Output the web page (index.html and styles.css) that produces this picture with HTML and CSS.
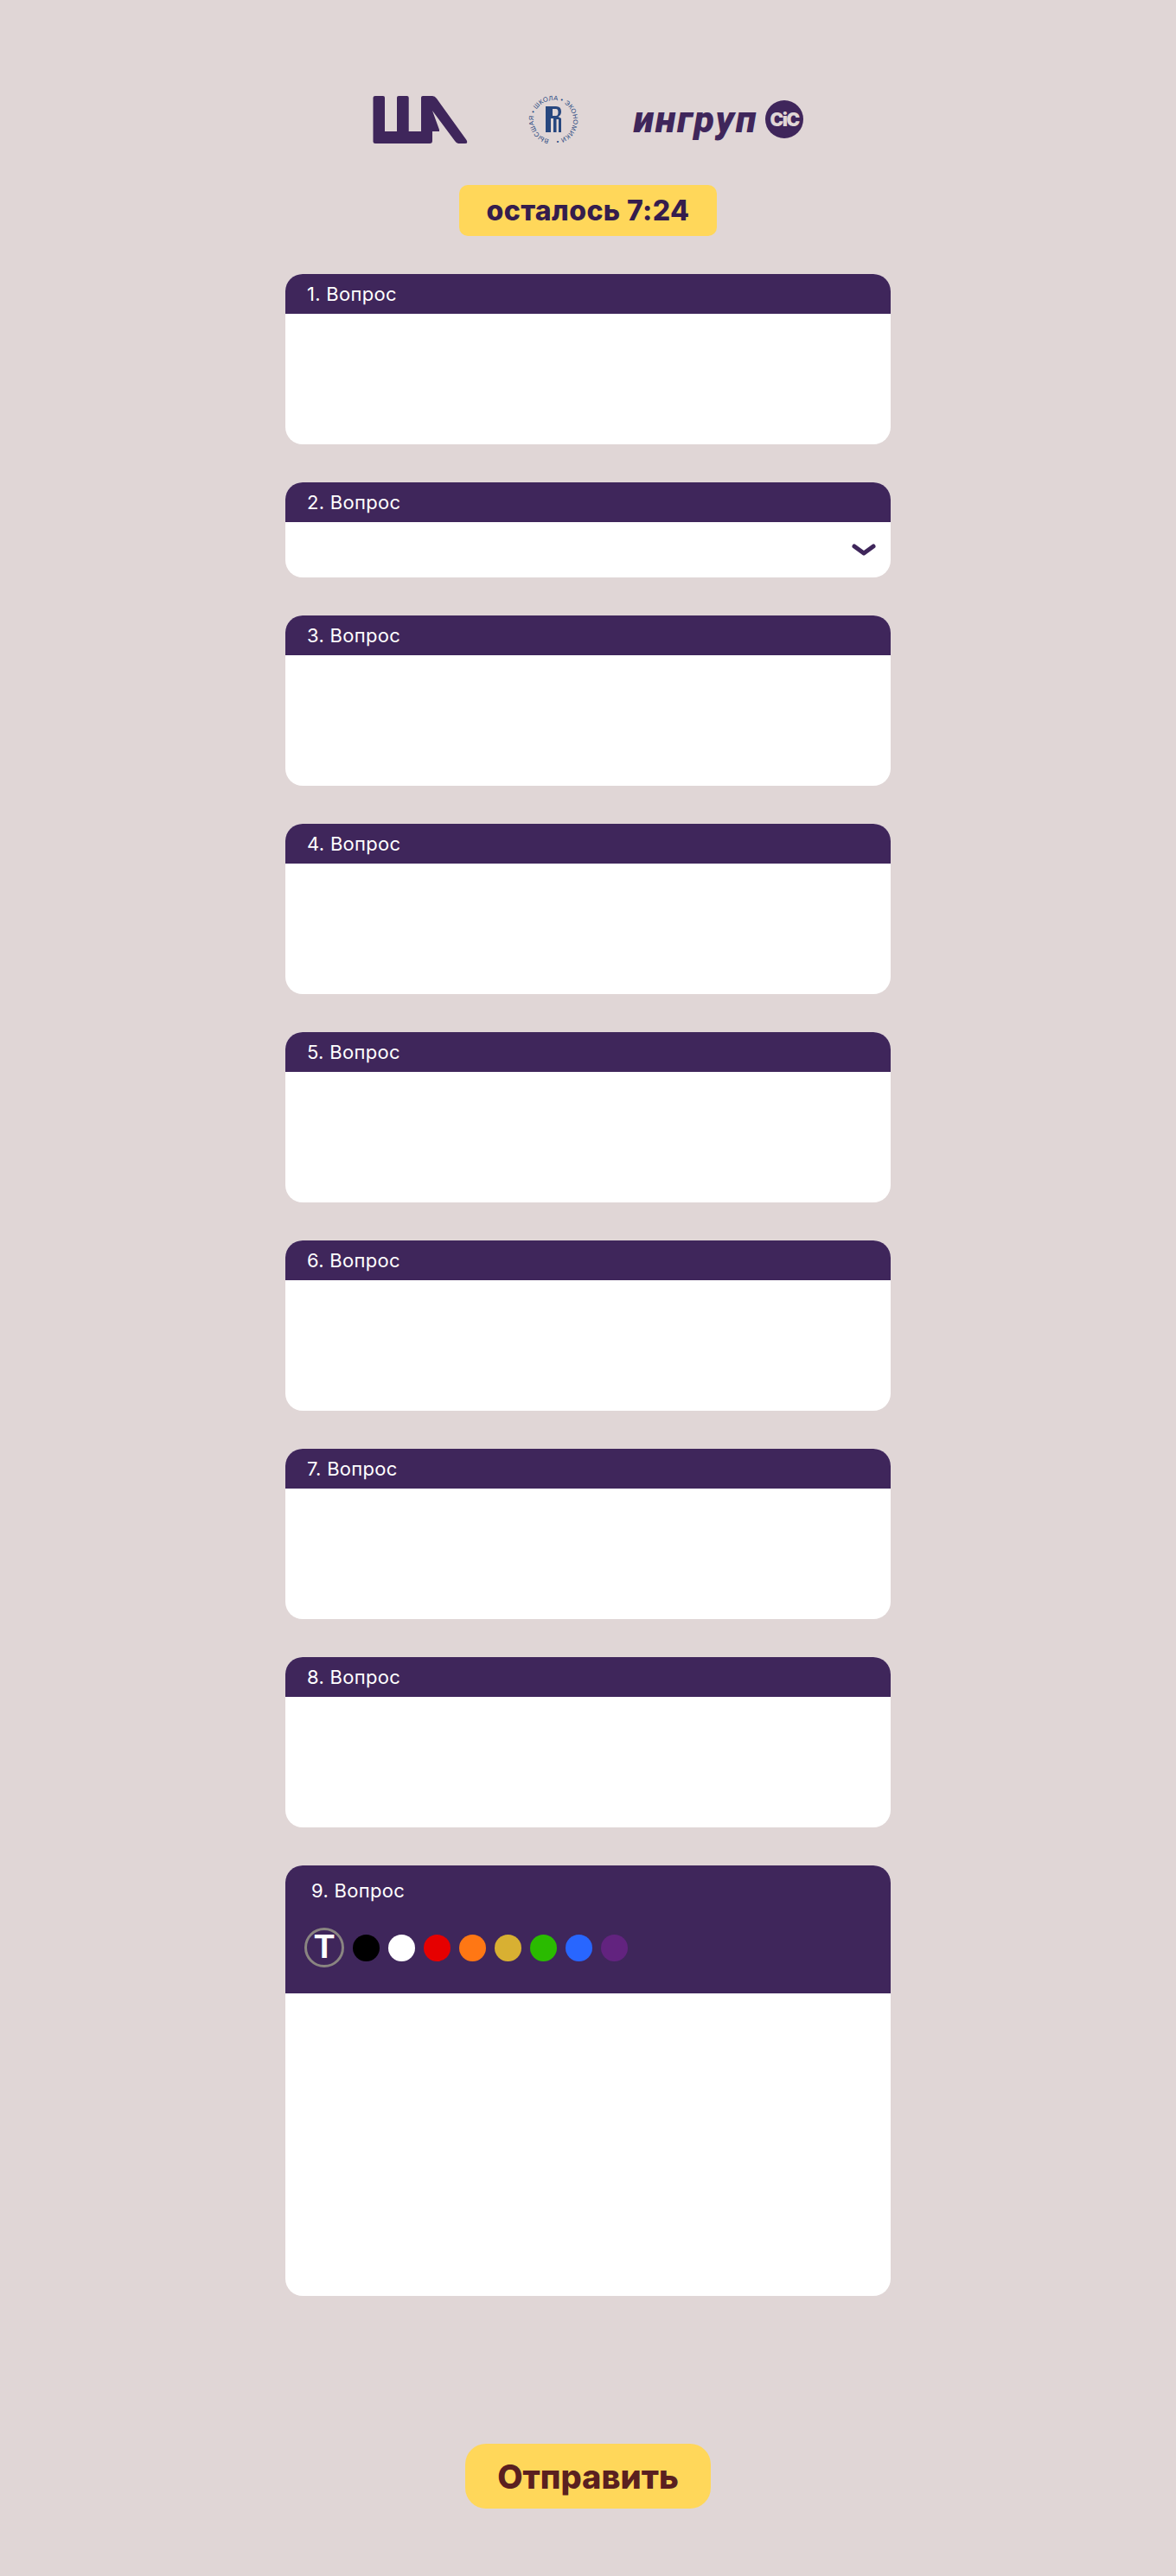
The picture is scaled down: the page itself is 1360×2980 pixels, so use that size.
FILE: index.html
```html
<!DOCTYPE html>
<html lang="ru">
<head>
<meta charset="utf-8">
<title>Тест</title>
<link rel="stylesheet" href="styles.css">
</head>
<body>
<main class="page">
  <header class="logos">
    <svg class="logo-sha" viewBox="431 111 110 55" aria-label="ША">
      <path d="M434 111H443Q445 111 445 113V152H459V113Q459 111 461 111H470.7Q472.7 111 472.7 113V152H487V113Q487 111 489 111H500Q503 111 505 114L539.5 162Q541.5 166 538 166H530Q528 166 526 163L500 128L508 150L508 152H500V163Q500 166 497 166H434Q431.5 166 431.5 164V113Q431.5 111 434 111Z"/>
    </svg>
    <svg class="logo-hse" viewBox="0 0 64 64" aria-label="ВШЭ">
      <defs><path id="ring" d="M32 55A23 23 0 1 1 32.01 55"/></defs>
      <text class="ring-text"><textPath href="#ring" startOffset="5" textLength="136">ВЫСШАЯ • ШКОЛА • ЭКОНОМИКИ •</textPath></text>
      <path class="mono" d="M23 16H35Q41 16 41 22Q41 26.500 37.500 28L41 30V46H38V31H35.500V46H32V30H29V46H23ZM31 19V27H35Q37.500 27 37.500 23Q37.500 19 35 19Z" fill-rule="evenodd"/>
    </svg>
    <div class="logo-ingroup">
      <span class="ingroup-name">ингруп</span>
      <span class="ingroup-badge">CiC</span>
    </div>
  </header>

  <div class="timer">осталось 7:24</div>

  <section class="questions">
    <article class="card"><h2 class="card-head">1. Вопрос</h2><div class="card-body"></div></article>
    <article class="card"><h2 class="card-head">2. Вопрос</h2>
      <div class="card-body card-body-select">
        <svg class="chevron" viewBox="0 0 28 14"><path d="M3 3L14 11L25 3"/></svg>
      </div>
    </article>
    <article class="card"><h2 class="card-head">3. Вопрос</h2><div class="card-body"></div></article>
    <article class="card"><h2 class="card-head">4. Вопрос</h2><div class="card-body"></div></article>
    <article class="card"><h2 class="card-head">5. Вопрос</h2><div class="card-body"></div></article>
    <article class="card"><h2 class="card-head">6. Вопрос</h2><div class="card-body"></div></article>
    <article class="card"><h2 class="card-head">7. Вопрос</h2><div class="card-body"></div></article>
    <article class="card"><h2 class="card-head">8. Вопрос</h2><div class="card-body"></div></article>
    <article class="card">
      <div class="canvas-head">
        <h2 class="canvas-title">9. Вопрос</h2>
        <div class="tools">
          <span class="tool-text">T</span>
          <span class="swatch c-black"></span>
          <span class="swatch c-white"></span>
          <span class="swatch c-red"></span>
          <span class="swatch c-orange"></span>
          <span class="swatch c-gold"></span>
          <span class="swatch c-green"></span>
          <span class="swatch c-blue"></span>
          <span class="swatch c-purple"></span>
        </div>
      </div>
      <div class="canvas-body"></div>
    </article>
  </section>

  <button class="submit" type="button">Отправить</button>
</main>
</body>
</html>
```

FILE: styles.css
```css
* { box-sizing: border-box; }
html, body { margin: 0; padding: 0; }
body {
  background: #e0d6d6;
  font-family: Inter, "Noto Sans", sans-serif;
  height: 2980px;
  overflow: hidden;
}
.page {
  display: flex;
  flex-direction: column;
  align-items: center;
  padding-top: 111px;
}
.logos {
  display: flex;
  align-items: flex-start;
  height: 56px;
}
.logo-sha { width: 110px; height: 55px; fill: #3f265b; display: block; }
.logo-hse { width: 64px; height: 64px; margin: -4px 61px 0 67px; display: block; }
.ring-text { font-family: "Liberation Sans", sans-serif; font-size: 7.500px; fill: #27477f; }
.mono { fill: #27477f; }
.logo-ingroup { display: flex; align-items: center; gap: 9px; margin-top: 5px; }
.ingroup-name {
  font-family: Roboto, sans-serif;
  font-weight: 900;
  font-style: italic;
  font-size: 43px;
  line-height: 44px;
  color: #3f265b;
  letter-spacing: 1.800px;
}
.ingroup-badge {
  width: 44px;
  height: 44px;
  border-radius: 50%;
  background: #3f265b;
  color: #e0d6d6;
  font-family: Inter, sans-serif;
  font-weight: 900;
  font-size: 21px;
  letter-spacing: -1.500px;
  display: flex;
  align-items: center;
  justify-content: center;
}
.timer {
  width: 298px;
  height: 59px;
  margin-top: 47px;
  border-radius: 10px;
  background: #ffd75a;
  color: #351d4d;
  font-weight: 800;
  font-size: 32px;
  letter-spacing: .4px;
  display: flex;
  align-items: center;
  justify-content: center;
}
.questions {
  width: 700px;
  margin-top: 44px;
  display: flex;
  flex-direction: column;
  gap: 44px;
}
.card { border-radius: 20px; overflow: hidden; background: #fff; }
.card-head {
  margin: 0;
  height: 46px;
  padding-left: 25px;
  background: #3f265b;
  color: #fff;
  font-weight: 400;
  font-size: 22px;
  letter-spacing: .3px;
  line-height: 46px;
}
.card-body { height: 151px; }
.card-body-select {
  height: 64px;
  display: flex;
  justify-content: flex-end;
  padding: 25px 17px 0 0;
}
.chevron { width: 28px; height: 14px; display: block; fill: none; stroke: #3f265b; stroke-width: 5px; stroke-linecap: round; stroke-linejoin: round; }
.canvas-head { height: 148px; background: #3f265b; padding: 12px 0 0 22px; }
.canvas-title { margin: 0; padding-left: 8px; color: #fff; font-weight: 400; font-size: 22px; letter-spacing: .3px; line-height: 35px; }
.tools { display: flex; align-items: center; gap: 10px; margin-top: 25px; }
.tool-text {
  width: 46px;
  height: 46px;
  border: 3.500px solid #8a8581;
  border-radius: 50%;
  color: #fff;
  font-family: "Liberation Sans", sans-serif;
  font-weight: 700;
  font-size: 38px;
  line-height: 38px;
  text-align: center;
}
.swatch { width: 31px; height: 31px; border-radius: 50%; }
.c-black { background: #000; }
.c-white { background: #fff; }
.c-red { background: #e60000; }
.c-orange { background: #ff7714; }
.c-gold { background: #d8b032; }
.c-green { background: #2abb00; }
.c-blue { background: #2866ff; }
.c-purple { background: #62237f; }
.canvas-body { height: 350px; }
.submit {
  width: 284px;
  height: 75px;
  margin-top: 171px;
  border: 0;
  border-radius: 24px;
  background: #ffd75a;
  color: #5a2020;
  font-family: Inter, sans-serif;
  font-weight: 800;
  font-size: 38px;
  padding: 0;
}
```
